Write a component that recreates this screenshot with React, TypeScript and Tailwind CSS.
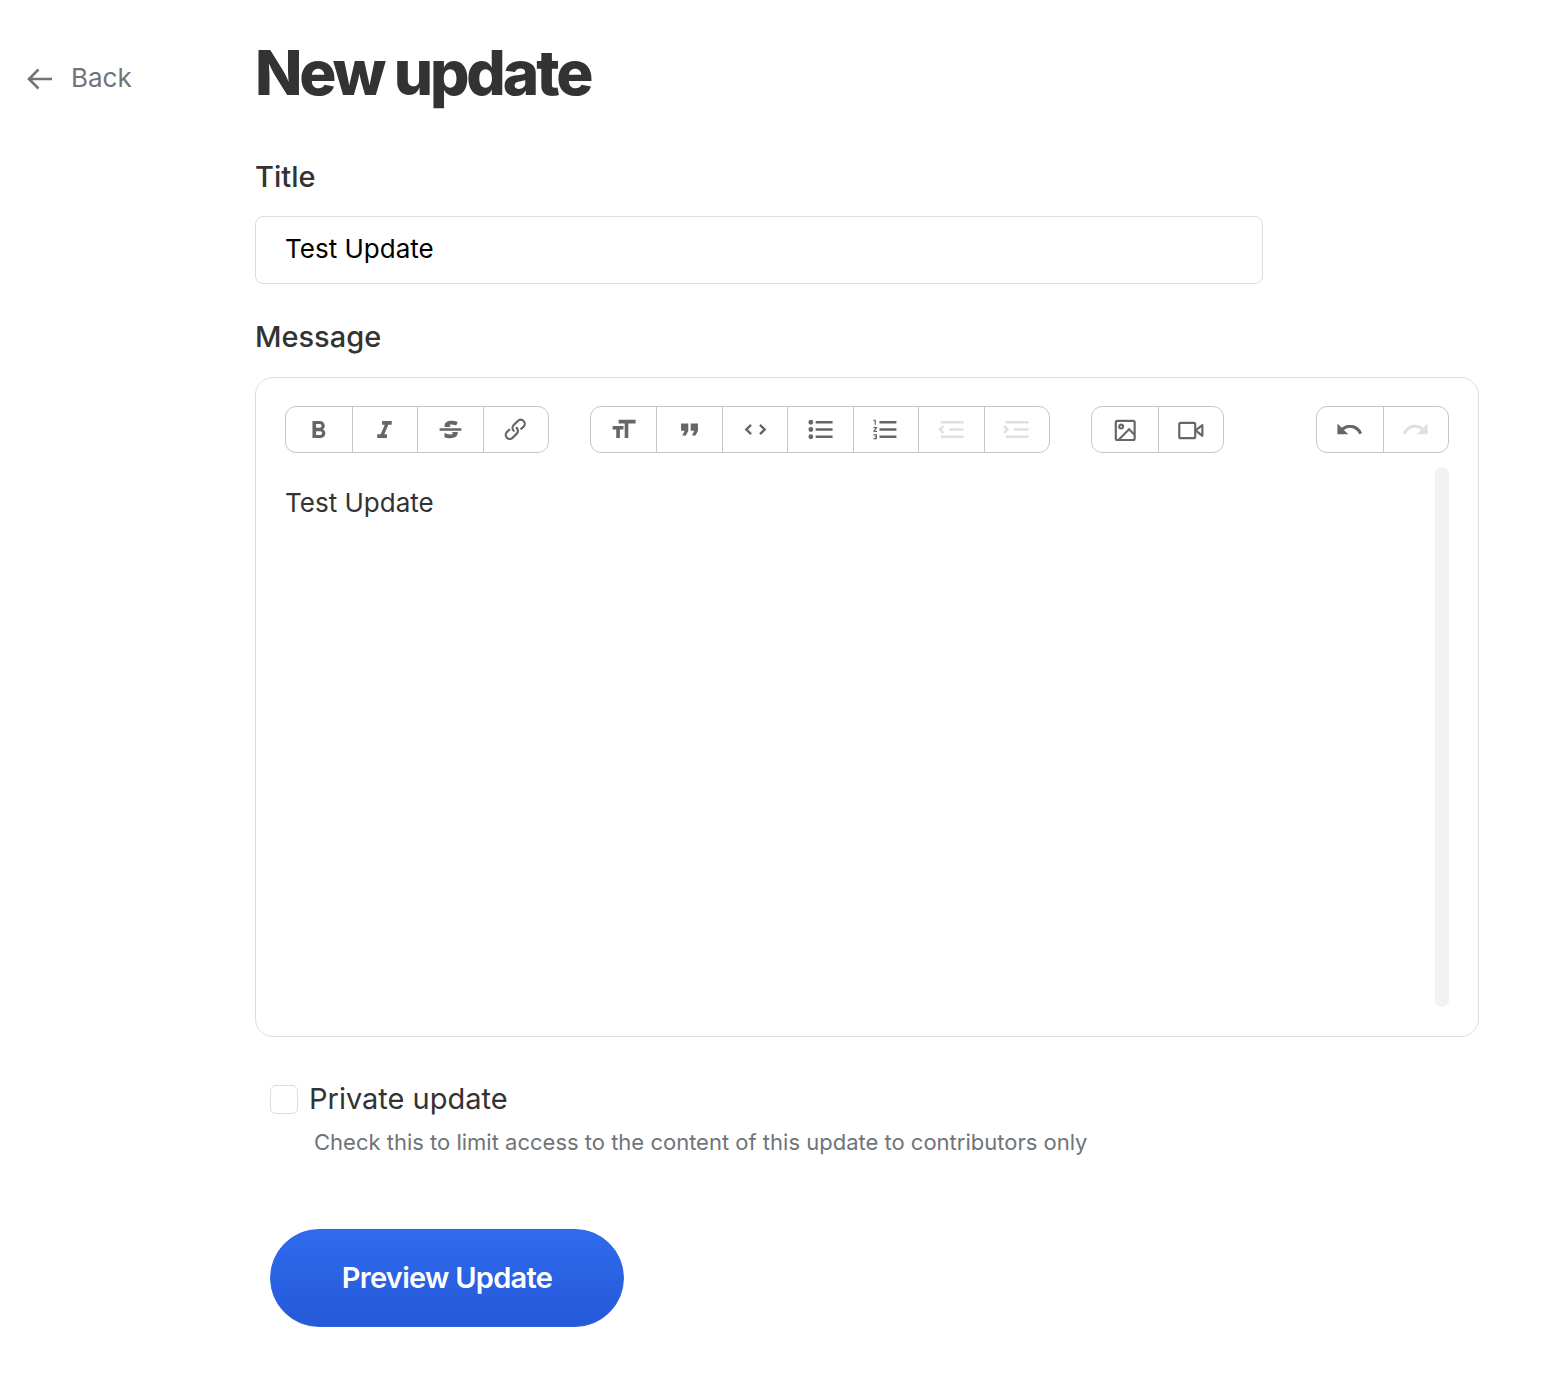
import { useState } from "react";
import type { ReactNode } from "react";

type Tool = { label: string; icon: ReactNode; disabled?: boolean };
type ToolGroup = { name: string; width: string; tools: Tool[] };

const groups: ToolGroup[] = [
  {
    name: "Text",
    width: "w-[264px]",
    tools: [
      {
        label: "Bold",
        icon: <path d="M15.6 11.8c1-.7 1.6-1.8 1.6-2.8a4 4 0 0 0-4-4H7v14h7c2.1 0 3.7-1.7 3.7-3.8 0-1.5-.8-2.8-2.1-3.4zM10 7.5h3a1.5 1.5 0 1 1 0 3h-3v-3zm3.5 9H10v-3h3.5a1.5 1.5 0 1 1 0 3z" />,
      },
      { label: "Italic", icon: <path d="M10 5v3h2.2l-3.4 8H6v3h8v-3h-2.2l3.4-8H18V5h-8z" /> },
      {
        label: "Strikethrough",
        icon: <path d="M12.73 14l.28.14c.26.15.45.3.57.44.12.14.18.3.18.5 0 .3-.15.56-.44.75-.3.2-.76.3-1.39.3A13.52 13.52 0 0 1 7 14.95v3.37a10.64 10.64 0 0 0 4.84.88c1.26 0 2.35-.19 3.28-.56.93-.37 1.64-.9 2.14-1.57s.74-1.45.74-2.32c0-.26-.02-.51-.06-.75h-5.21zm-5.5-4c-.08-.34-.12-.7-.12-1.1 0-1.29.52-2.3 1.58-3.02 1.05-.72 2.5-1.08 4.34-1.08 1.62 0 3.28.34 4.97 1l-1.3 2.93c-1.47-.6-2.73-.9-3.8-.9-.55 0-.96.08-1.2.26-.26.17-.38.38-.38.64 0 .27.16.52.48.74.17.12.53.3 1.05.53H7.23zM3 13h18v-2H3v2z" />,
      },
      {
        label: "Link",
        icon: <path d="M9.88 13.7a4.3 4.3 0 0 1 0-6.07l3.37-3.37a4.26 4.26 0 0 1 6.07 0 4.3 4.3 0 0 1 0 6.06l-1.96 1.72a.91.91 0 1 1-1.3-1.3l1.97-1.71a2.46 2.46 0 0 0-3.48-3.48l-3.38 3.37a2.46 2.46 0 0 0 0 3.48.91.91 0 1 1-1.3 1.3zM4.25 19.46a4.3 4.3 0 0 1 0-6.07l1.93-1.9a.91.91 0 1 1 1.3 1.3l-1.93 1.9a2.46 2.46 0 0 0 3.48 3.48l3.37-3.38c.96-.96.96-2.52 0-3.48a.91.91 0 1 1 1.3-1.3 4.3 4.3 0 0 1 0 6.07l-3.38 3.38a4.26 4.26 0 0 1-6.07 0z" />,
      },
    ],
  },
  {
    name: "Blocks",
    width: "w-[460px]",
    tools: [
      { label: "Heading", icon: <path d="M12 9v3H9v7H6v-7H3V9h9zM8 4h14v3h-6v12h-3V7H8V4z" /> },
      { label: "Quote", icon: <path d="M6 17h3l2-4V7H5v6h3zm8 0h3l2-4V7h-6v6h3z" /> },
      {
        label: "Code",
        icon: <path d="M18.2 12L15 15.2l1.4 1.4L21 12l-4.6-4.6L15 8.8l3.2 3.2zM5.8 12L9 8.8 7.6 7.4 3 12l4.6 4.6L9 15.2 5.8 12z" />,
      },
      {
        label: "Bullets",
        icon: <path d="M4 4a2 2 0 1 0 0 4 2 2 0 0 0 0-4zm0 6a2 2 0 1 0 0 4 2 2 0 0 0 0-4zm0 6a2 2 0 1 0 0 4 2 2 0 0 0 0-4zm4 3h14v-2H8v2zm0-6h14v-2H8v2zm0-8v2h14V5H8z" />,
      },
      {
        label: "Numbers",
        icon: <path d="M2 17h2v.5H3v1h1v.5H2v1h3v-4H2v1zm1-9h1V4H2v1h1v3zm-1 3h1.8L2 13.1v.9h3v-1H3.2L5 10.9V10H2v1zm5-6v2h14V5H7zm0 14h14v-2H7v2zm0-6h14v-2H7v2z" />,
      },
      {
        label: "Decrease level",
        disabled: true,
        icon: <path d="M3 19h19v-2H3v2zm7-6h12v-2H10v2zm-8.3-.3l2.8 2.9L6 14.2 4 12l2-2-1.4-1.5L1 12l.7.7zM3 5v2h19V5H3z" />,
      },
      {
        label: "Increase level",
        disabled: true,
        icon: <path d="M3 19h19v-2H3v2zm7-6h12v-2H10v2zm-6.9-1L1 14.2l1.4 1.4L6 12l-.7-.7-2.8-2.8L1 9.9 3.1 12zM3 5v2h19V5H3z" />,
      },
    ],
  },
  {
    name: "Media",
    width: "w-[133px]",
    tools: [
      {
        label: "Image",
        icon: (
          <g fill="none" stroke="currentColor" strokeWidth="1.8">
            <rect x="4.8" y="4.9" width="15.6" height="15.8" rx="1.2" />
            <circle cx="9.2" cy="9.6" r="1.6" />
            <path d="M7.2 20.4l8.6-8.6 4.5 4.6" />
          </g>
        ),
      },
      {
        label: "Video",
        icon: (
          <g fill="none" stroke="currentColor" strokeWidth="1.8" strokeLinejoin="round">
            <rect x="2.7" y="6.5" width="13.2" height="12.6" rx="1.2" />
            <path d="M16.2 12.8l5.6-4.4v8.8z" />
          </g>
        ),
      },
    ],
  },
  {
    name: "History",
    width: "ml-auto w-[133px]",
    tools: [
      { label: "Undo", icon: <path d="M12.5 8c-2.6 0-5 1-6.9 2.6L2 7v9h9l-3.6-3.6A8 8 0 0 1 20 16l2.4-.8a10.5 10.5 0 0 0-10-7.2z" /> },
      {
        label: "Redo",
        disabled: true,
        icon: <path d="M18.4 10.6a10.5 10.5 0 0 0-16.9 4.6L4 16a8 8 0 0 1 12.7-3.6L13 16h9V7l-3.6 3.6z" />,
      },
    ],
  },
];

function Toolbar() {
  return (
    <div role="toolbar" aria-label="Formatting" className="flex gap-[41px]">
      {groups.map((group) => (
        <div
          key={group.name}
          role="group"
          aria-label={group.name}
          className={`grid h-[47px] auto-cols-fr grid-flow-col rounded-[11px] border border-[#c6c6c8] ${group.width}`}
        >
          {group.tools.map((tool) => (
            <button
              key={tool.label}
              type="button"
              aria-label={tool.label}
              disabled={tool.disabled}
              className="flex items-center justify-center border-l border-[#c6c6c8] text-[#666666] first:border-l-0 disabled:text-[#e0e0e0]"
            >
              <svg viewBox="0 0 24 24" className="size-[29px]" fill="currentColor" aria-hidden="true">
                {tool.icon}
              </svg>
            </button>
          ))}
        </div>
      ))}
    </div>
  );
}

export default function App() {
  const [title, setTitle] = useState("Test Update");
  const [message, setMessage] = useState("Test Update");
  const [isPrivate, setIsPrivate] = useState(false);

  return (
    <div className="flex min-h-screen bg-white font-['Inter',sans-serif] text-[#333333]">
      <nav className="w-[255px] shrink-0 pt-[62px] pl-[27px]">
        <a href="#back" className="inline-flex items-center gap-[18px] text-[26px] leading-8 text-[#6f7479]">
          <svg viewBox="0 0 26 22" className="mt-px h-[22px] w-[26px]" fill="none" stroke="currentColor" strokeWidth="2.6" aria-hidden="true">
            <path d="M11.5 1.5L2 11l9.5 9.5M2 11h23" />
          </svg>
          Back
        </a>
      </nav>

      <main className="min-w-0 flex-1 pt-[35px] pr-[69px] pb-[57px]">
        <h1 className="text-[62px] leading-[76px] font-extrabold tracking-tighter">New update</h1>

        <form onSubmit={(e) => e.preventDefault()}>
          <label htmlFor="title" className="mt-[46px] block text-[29px] leading-10 font-medium">
            Title
          </label>
          <input
            id="title"
            type="text"
            value={title}
            onChange={(e) => setTitle(e.target.value)}
            className="mt-[19px] block h-[68px] w-full max-w-[1008px] rounded-lg border border-[#dcdddf] px-[29px] pb-[3px] text-[26px] text-black outline-none"
          />

          <label htmlFor="message" className="mt-[33px] block text-[29px] leading-10 font-medium">
            Message
          </label>
          <div className="mt-5 rounded-[18px] border border-[#dcdddf] px-[29px] pt-7 pb-[29px]">
            <Toolbar />
            <div className="mt-[14px] flex h-[540px]">
              <textarea
                id="message"
                value={message}
                onChange={(e) => setMessage(e.target.value)}
                className="block min-w-0 flex-1 resize-none pt-4 text-[26px] leading-10 outline-none"
              />
              <div className="w-[14px] rounded-full bg-[#f1f2f4]" />
            </div>
          </div>

          <div className="mt-[42px] pl-[15px]">
            <div className="flex items-center gap-[11px]">
              <input
                id="private"
                type="checkbox"
                checked={isPrivate}
                onChange={(e) => setIsPrivate(e.target.checked)}
                aria-describedby="private-hint"
                className="h-[29px] w-7 appearance-none rounded-md border border-[#dcdddf] bg-white checked:bg-[#2d69ea]"
              />
              <label htmlFor="private" className="text-[29px] leading-10">
                Private update
              </label>
            </div>
            <p id="private-hint" className="mt-[7px] pl-11 text-[22px] leading-8 text-[#6f7479]">
              Check this to limit access to the content of this update to contributors only
            </p>
            <button
              type="submit"
              className="mt-[71px] h-[98px] w-[354px] rounded-full border border-[#2d63e2] bg-linear-to-b from-[#2f6bed] to-[#2459d9] text-[29px] font-semibold tracking-tight text-white"
            >
              Preview Update
            </button>
          </div>
        </form>
      </main>
    </div>
  );
}
